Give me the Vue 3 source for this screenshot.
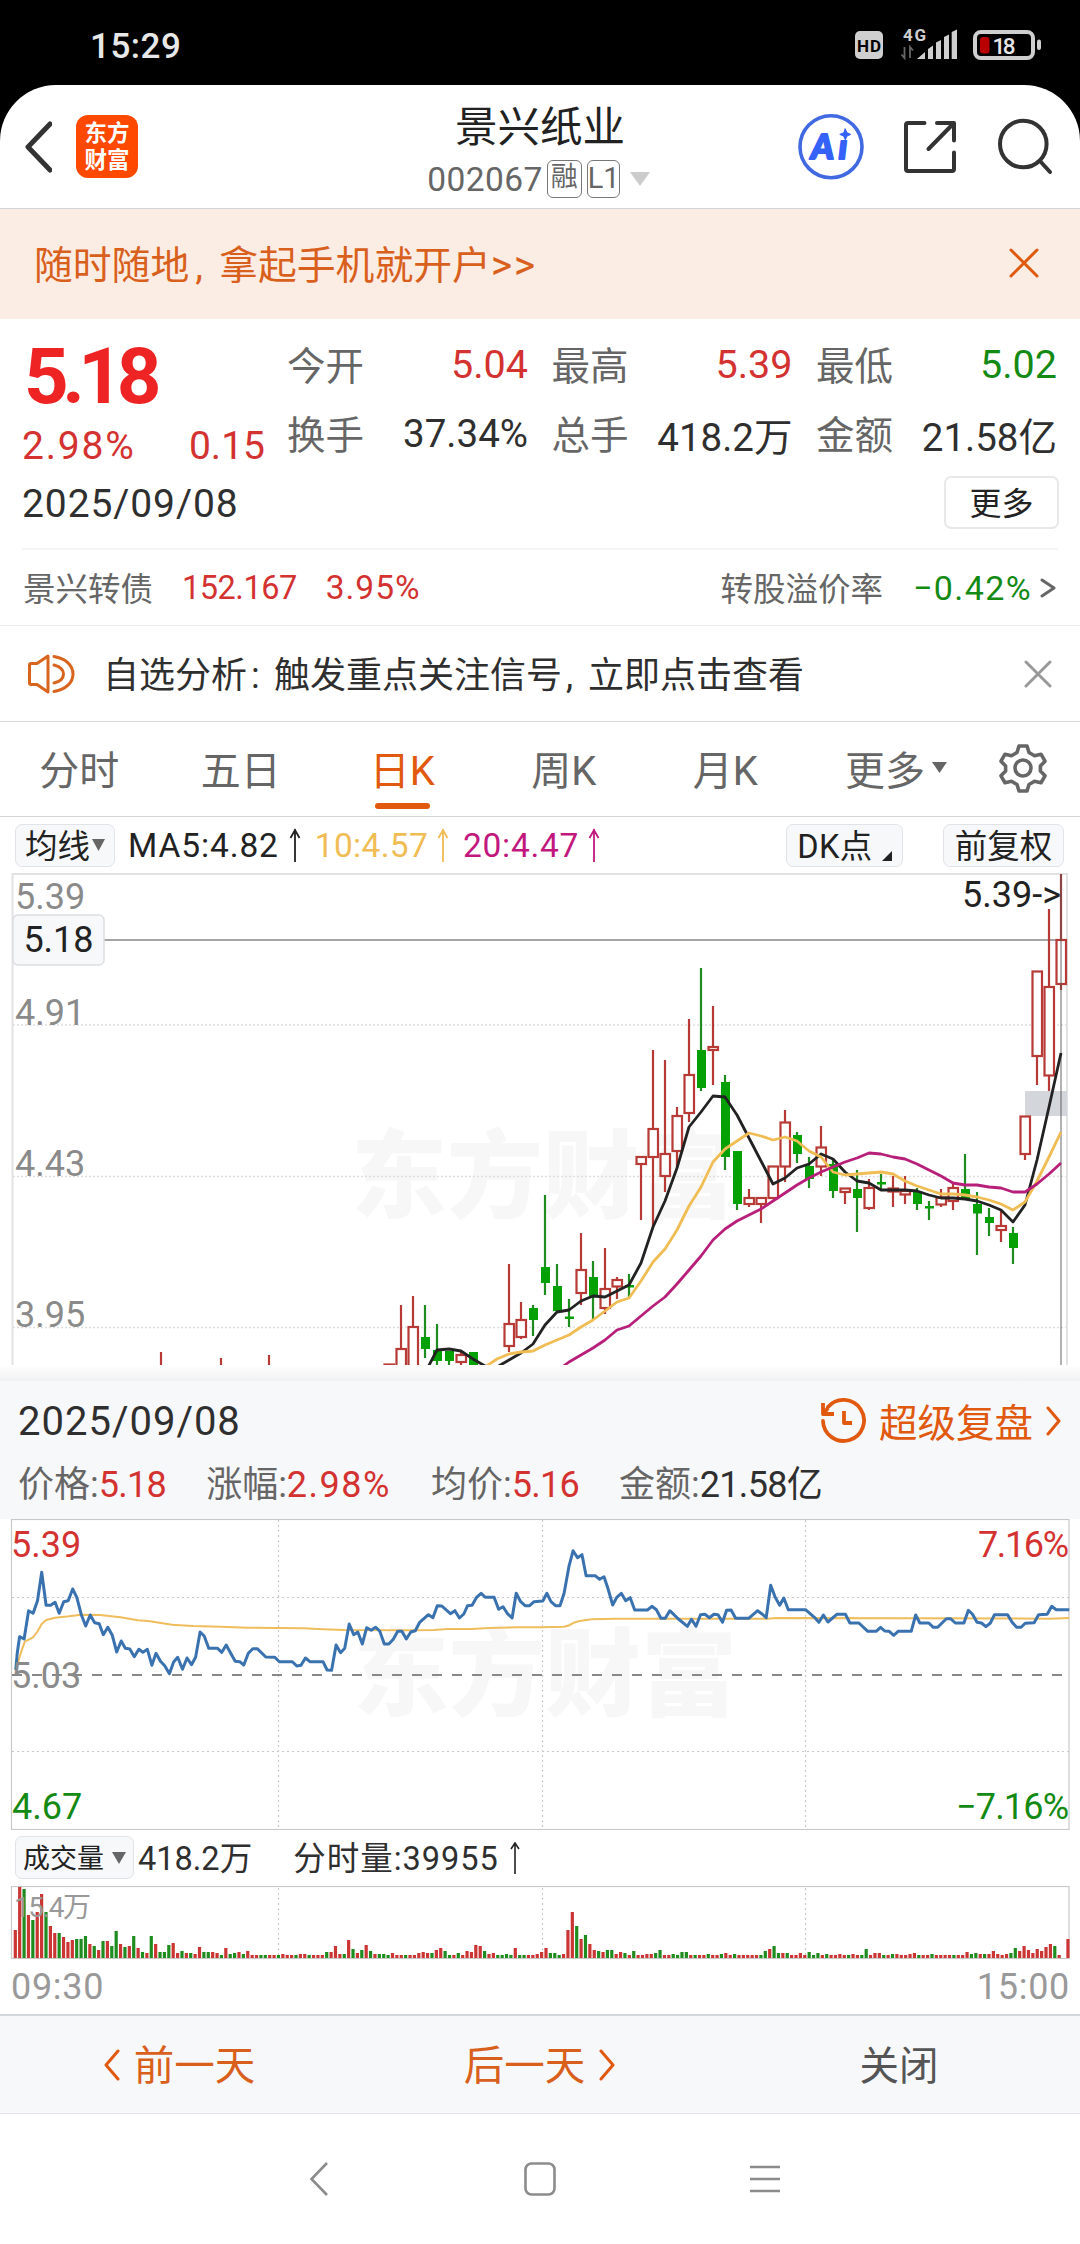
<template>
  <div class="phone">
    <div class="status-bar">
      <span class="clock">15:29</span>
      <svg class="status-icons" width="190" height="42" viewBox="852 21 190 42">
        <rect x="855" y="31" width="28" height="28" rx="5" fill="#cfcfcf" />
        <text x="857" y="51.5" font-size="17" font-weight="700" textLength="24" fill="#000">HD</text>
        <text x="903" y="40.5" font-size="17" font-weight="700" textLength="23" fill="#cfcfcf">4G</text>
        <path d="M904.5 47v11l-3-3.500M910 58v-11l3 3.500" fill="none" stroke="#666" stroke-width="1.800" />
        <path d="M917 59l8-7v7zM928 59V49l5-3.500V59zM936 59V42.500l5-2.500v19zM944 59V37l5-2.500V59zM951.700 59V32l5.300-2.500V59z" fill="#cfcfcf" />
        <rect x="975" y="32" width="58" height="26" rx="6" fill="none" stroke="#cfcfcf" stroke-width="4" />
        <rect x="980" y="37" width="9.500" height="16.500" rx="3" fill="#b80000" />
        <rect x="1037" y="39.500" width="4" height="10.500" rx="2" fill="#cfcfcf" />
        <text x="992.500" y="53.500" font-size="22.500" font-weight="500" textLength="23" fill="#e6e6e6">18</text>
      </svg>
    </div>

    <header class="header">
      <div class="header-left">
        <svg width="28" height="52" viewBox="0 0 28 52" class="line-icon">
          <path d="M26 3L4 26l22 23" stroke-width="5" />
        </svg>
        <div class="app-logo"><span>东方</span><span>财富</span></div>
      </div>
      <div class="header-title">
        <h1>景兴纸业</h1>
        <div class="stock-code">
          <span>002067</span><i class="tag">融</i><i class="tag tag-l1">L1</i>
          <svg width="20" height="14" viewBox="0 0 20 14"><path d="M0 0h20L10 14z" fill="#ccc" /></svg>
        </div>
      </div>
      <svg class="header-actions line-icon" width="260" height="70" viewBox="796 112 260 70">
        <circle cx="831" cy="146.700" r="31" stroke="#4169e1" stroke-width="3.600" />
        <text y="158.500" class="ai-text"><tspan x="811">A</tspan><tspan x="838.500">ı</tspan></text>
        <path d="M845.300 129l1.700 3.800 3.800 1.600-3.800 1.600-1.700 3.800-1.700-3.800-3.800-1.600 3.800-1.600z" fill="#3563fa" stroke="#3563fa" stroke-width="1" />
        <path d="M924.500 123H908q-2 0-2 2v44q0 2 2 2h44q2 0 2-2v-16.500M937 123h17v17.500M953 124l-24.500 25" />
        <circle cx="1023.300" cy="144" r="23.300" />
        <path d="M1040 161l10 11" />
      </svg>
    </header>

    <div class="banner">
      <p>随时随地<em>,</em>拿起手机就开户<b>&gt;&gt;</b></p>
      <svg width="30" height="30" viewBox="0 0 30 30" class="line-icon">
        <path d="M2 2l26 26M28 2L2 28" stroke="#e0590f" stroke-width="3" />
      </svg>
    </div>

    <section class="quote">
      <div class="quote-main">
        <div class="price">5.18</div>
        <div class="change"><span class="change-rate">2.98%</span><span>0.15</span></div>
      </div>
      <div class="quote-grid">
        <div v-for="item in quotes" :key="item.label" class="quote-cell">
          <label>{{ item.label }}</label>
          <span :class="item.tone">{{ item.value }}</span>
        </div>
      </div>
      <div class="quote-date">
        <span>2025/09/08</span>
        <button>更多</button>
      </div>
    </section>

    <section class="bond">
      <span class="bond-name">景兴转债</span>
      <span class="bond-price">152.167</span>
      <span class="bond-rate">3.95%</span>
      <span class="premium">转股溢价率</span>
      <span class="premium-rate">−0.42%</span>
      <svg width="17" height="22" viewBox="0 0 17 22" class="line-icon"><path d="M2 3l12 8-12 8" stroke="#666" stroke-width="3" /></svg>
    </section>

    <section class="alert">
      <svg width="48" height="42" viewBox="0 0 48 42" class="line-icon" >
        <g stroke="#d9641e" stroke-width="3">
          <path d="M2.500 12q0-1.500 1.500-1.500h6L21 3v36L10 31.500H4q-1.500 0-1.500-1.500z" />
          <path d="M27 3.500c12 2 19 9 19 17.500s-7 15.500-19 17.500" />
          <path d="M27 12c6 1.500 9.500 5 9.500 9s-3.500 7.500-9.500 9" />
        </g>
      </svg>
      <p>自选分析<em>:</em>触发重点关注信号<em>,</em>立即点击查看</p>
      <svg width="28" height="28" viewBox="0 0 28 28" class="line-icon">
        <path d="M2 2l24 24M26 2L2 26" stroke="#999" stroke-width="3" />
      </svg>
    </section>

    <nav class="tabs">
      <div v-for="tab in tabs" :key="tab" class="tab" :class="{ active: tab === activeTab }" @click="activeTab = tab">
        {{ tab }}
        <svg v-if="tab === '更多'" width="15" height="11" viewBox="0 0 15 11"><path d="M0 0h15L7.500 11z" fill="#666" /></svg>
      </div>
      <div class="tab-setting">
        <svg width="50" height="50" viewBox="0 0 50 50" class="line-icon">
          <g stroke="#666" stroke-width="3.600">
            <path d="M21 3h8l2 6.500 5.500 3.200 6.500-1.500 4 7-4.600 4.800v5l4.600 4.800-4 7-6.500-1.500-5.500 3.200-2 6.500h-8l-2-6.500-5.500-3.200L7 39.800l-4-7L7.600 28v-5L3 18.200l4-7 6.500 1.500L19 9.500z" />
            <circle cx="25" cy="25" r="8" />
          </g>
        </svg>
      </div>
    </nav>

    <div class="indicator">
      <button class="chip chip-ma"><span>均线</span><svg width="13" height="12" viewBox="0 0 13 12"><path d="M0 0h13L6.500 12z" fill="#666" /></svg></button>
      <span v-for="ma in averages" :key="ma.text" class="ma" :class="ma.name">
        {{ ma.text }}
        <svg width="12" height="34" viewBox="0 0 12 34" fill="none" stroke="currentColor" stroke-width="1.800"><path d="M6 34V1M1.500 10L6 2l4.500 8" /></svg>
      </span>
      <button class="chip chip-dk"><span>DK点</span><svg width="10" height="10" viewBox="0 0 10 10"><path d="M10 0v10H0z" fill="#222" /></svg></button>
      <button class="chip"><span>前复权</span></button>
    </div>

    <!-- 日K -->
    <svg class="chart" width="1080" height="492" viewBox="0 873 1080 492">
      <text x="351" y="1210" class="watermark">东方财富</text>
      <g stroke="#dedede" stroke-width="1.500" stroke-dasharray="2 2">
        <path d="M13 1025h1054M13 1176.500h1054M13 1327.500h1054" />
      </g>
      <path d="M12.500 1370V874H1067V1370" fill="none" stroke="#e2e2e2" stroke-width="2" />
      <path d="M104 940h963" stroke="#a5a5a5" stroke-width="1.800" />
      <rect x="1025" y="1091" width="42" height="25" fill="#d3d6db" />
      <g v-for="c in candles" :key="c.x" :class="c.up ? 'rise' : 'fall'">
        <template v-if="c.up">
          <path :d="`M${c.x} ${c.high}V${c.top}M${c.x} ${c.bottom}V${c.low}`" />
          <rect :x="c.x - 4.5" :y="c.top" width="9.500" :height="c.bottom - c.top" />
        </template>
        <template v-else>
          <path :d="`M${c.x} ${c.high}V${c.low}`" />
          <rect :x="c.x - 4" :y="c.top" width="9" :height="c.bottom - c.top" />
        </template>
      </g>
      <path d="M1061 874V1365" stroke="#555" stroke-opacity="0.45" stroke-width="2" />
      <g fill="none" stroke-width="2.800" stroke-linejoin="round">
        <polyline :points="maLine(425, ma5)" stroke="#222" />
        <polyline :points="maLine(485, ma10)" stroke="#f0bd55" />
        <polyline :points="maLine(557, ma20)" stroke="#b81f7a" />
      </g>
      <g class="axis">
        <text x="15" y="909">5.39</text>
        <text x="15" y="1025">4.91</text>
        <text x="15" y="1176">4.43</text>
        <text x="15" y="1327">3.95</text>
        <text x="1061" y="907" text-anchor="end" class="axis-current">5.39-&gt;</text>
      </g>
      <rect x="13" y="915" width="91" height="50" rx="5" fill="#f7f8fa" stroke="#dcdfe3" stroke-width="1.500" />
      <text x="58.500" y="952" text-anchor="middle" class="axis-current">5.18</text>
    </svg>
    <div class="sheet-shadow"></div>

    <section class="replay">
      <div class="replay-head">
        <span class="replay-date">2025/09/08</span>
        <div class="replay-link">
          <svg width="46" height="46" viewBox="0 0 46 46" class="line-icon">
            <g stroke="#e0590f" stroke-width="3.800">
              <path d="M3 23a20.500 20.500 0 1 0 5-14" />
              <path d="M3 5v11h11M8 10l-4 5M24 13v12h8" stroke-linecap="butt" />
            </g>
          </svg>
          <span>超级复盘</span>
          <svg width="16" height="30" viewBox="0 0 16 30" class="line-icon"><path d="M2 2l11 13L2 28" stroke="#e0590f" stroke-width="3" /></svg>
        </div>
      </div>
      <div class="replay-stats">
        <span v-for="s in stats" :key="s.label">{{ s.label }}:<b :class="s.tone">{{ s.value }}</b></span>
      </div>
    </section>

    <!-- 分时 -->
    <svg class="chart" width="1080" height="311" viewBox="0 1519 1080 311">
      <text x="353" y="1708" class="watermark">东方财富</text>
      <g fill="none" stroke="#c9c9c9" stroke-width="1.200" stroke-dasharray="2 3">
        <path d="M12 1597.500h1057M12 1751.500h1057M278.500 1520v309M542.500 1520v309M805.500 1520v309" />
      </g>
      <rect x="11.500" y="1519.500" width="1057.500" height="310" fill="none" stroke="#c8c8c8" stroke-width="1.200" />
      <path d="M12 1675h1052" stroke="#888" stroke-width="2" stroke-dasharray="10 10" />
      <g fill="none" stroke-linejoin="round">
        <polyline :points="avgLine" stroke="#efbd5c" stroke-width="2" />
        <polyline :points="priceLine" stroke="#3a72b0" stroke-width="3" />
      </g>
      <g class="axis">
        <text x="11" y="1557" class="axis-up">5.39</text>
        <text x="11" y="1688">5.03</text>
        <text x="12" y="1819" class="axis-down">4.67</text>
        <text x="978" y="1557" textLength="91" class="axis-up">7.16%</text>
        <text x="956" y="1819" textLength="113" class="axis-down">−7.16%</text>
      </g>
    </svg>

    <div class="volume-head">
      <button class="chip chip-vol"><span>成交量</span><svg width="14" height="12" viewBox="0 0 14 12"><path d="M0 0h14L7 12z" fill="#666" /></svg></button>
      <span class="vol-total">418.2万</span>
      <span class="vol-minute">分时量:39955</span>
      <svg width="12" height="32" viewBox="0 0 12 32" fill="none" stroke="#222" stroke-width="1.600"><path d="M6 32V1M2 7l4-6 4 6" /></svg>
    </div>
    <svg class="chart" width="1080" height="73" viewBox="0 1886 1080 73">
      <path d="M278.500 1888v70M542.500 1888v70M805.500 1888v70" stroke="#c9c9c9" stroke-width="1.200" stroke-dasharray="2 3" />
      <rect x="11.500" y="1886.500" width="1057.500" height="72" fill="none" stroke="#c8c8c8" stroke-width="1.200" />
      <rect
        v-for="(v, i) in volumes"
        :key="i"
        :x="13.7 + i * 4.386"
        :y="1958 - Math.abs(v)"
        width="3.200"
        :height="Math.abs(v)"
        :fill="v > 0 ? '#cb3533' : '#1f8c1f'"
      />
      <text x="14" y="1916.500" textLength="77" class="vol-max">15.4万</text>
    </svg>
    <div class="time-axis"><span>09:30</span><span>15:00</span></div>

    <div class="pager">
      <div class="pager-item">
        <svg width="18" height="32" viewBox="0 0 18 32" class="line-icon"><path d="M15 2L3 16l12 14" stroke="#e0590f" stroke-width="3" /></svg>
        <span>前一天</span>
      </div>
      <div class="pager-item next">
        <span>后一天</span>
        <svg width="18" height="32" viewBox="0 0 18 32" class="line-icon"><path d="M3 2l12 14L3 30" stroke="#e0590f" stroke-width="3" /></svg>
      </div>
      <div class="pager-item close"><span>关闭</span></div>
    </div>

    <div class="system-nav">
      <svg width="480" height="36" viewBox="305 2161 480 36" fill="none" stroke="#8c8c8c" stroke-width="2.600">
        <path d="M327 2163l-15.500 16 15.500 16" />
        <rect x="525.500" y="2163.500" width="29" height="31" rx="6" />
        <path d="M750 2167h30M750 2179h30M750 2191h30" />
      </svg>
    </div>
  </div>
</template>

<script setup>
import { ref, computed } from 'vue'

const quotes = [
  { label: '今开', value: '5.04', tone: 'up' },
  { label: '最高', value: '5.39', tone: 'up' },
  { label: '最低', value: '5.02', tone: 'down' },
  { label: '换手', value: '37.34%' },
  { label: '总手', value: '418.2万' },
  { label: '金额', value: '21.58亿' }
]

const tabs = ['分时', '五日', '日K', '周K', '月K', '更多']
const activeTab = ref('日K')

const averages = [
  { name: 'ma5', text: 'MA5:4.82' },
  { name: 'ma10', text: '10:4.57' },
  { name: 'ma20', text: '20:4.47' }
]

const stats = [
  { label: '价格', value: '5.18', tone: 'up' },
  { label: '涨幅', value: '2.98%', tone: 'up' },
  { label: '均价', value: '5.16', tone: 'up' },
  { label: '金额', value: '21.58亿', tone: '' }
]

// [x, 最高, 最低, 实体上沿, 实体下沿, 是否阳线]
const candles = [
  [161, 1352, 1380, 1370, 1380, 1],
  [221, 1358, 1380, 1370, 1380, 1],
  [269, 1355, 1380, 1370, 1380, 1],
  [389, 1364.5, 1400, 1364.5, 1400, 1],
  [401, 1305, 1400, 1349, 1400, 1],
  [413, 1296, 1400, 1327, 1400, 1],
  [425, 1305, 1358, 1337, 1349, 0],
  [437, 1324, 1366, 1350, 1361, 0],
  [449, 1351, 1366, 1351, 1361, 0],
  [461, 1352, 1366, 1355, 1362, 1],
  [473, 1352, 1370, 1352, 1370, 0],
  [509, 1264, 1352, 1324, 1346, 1],
  [521, 1302, 1339, 1320, 1337, 1],
  [533, 1305, 1336, 1308, 1320, 0],
  [545, 1195, 1295, 1267, 1283, 0],
  [557, 1264, 1311, 1286, 1311, 0],
  [569, 1299, 1327, 1316.5, 1319, 0],
  [581, 1233, 1305, 1270, 1293, 1],
  [593, 1261, 1320, 1277, 1296, 0],
  [605, 1248, 1314, 1289, 1308, 1],
  [617, 1277, 1299, 1280, 1286.5, 1],
  [629, 1274, 1299, 1285, 1287.5, 0],
  [641, 1157, 1220, 1157, 1164, 1],
  [653, 1050, 1227, 1129, 1157, 1],
  [665, 1060, 1192, 1154, 1176, 1],
  [677, 1107, 1168, 1116, 1151, 1],
  [689, 1019, 1122, 1075, 1113, 1],
  [701, 968, 1091, 1050, 1088, 0],
  [713, 1006, 1085, 1047, 1050, 1],
  [725, 1075, 1170, 1082, 1157, 0],
  [737, 1151, 1210, 1151, 1204, 0],
  [749, 1189, 1207, 1198, 1204, 1],
  [761, 1198, 1223, 1198, 1204, 1],
  [773, 1166, 1198, 1166.5, 1198, 1],
  [785, 1110, 1182, 1122.5, 1166.5, 1],
  [797, 1132, 1163, 1135, 1154, 0],
  [809, 1157, 1188, 1166, 1179, 0],
  [821, 1126, 1176, 1147.5, 1166.5, 1],
  [833, 1158, 1198, 1164, 1191, 0],
  [845, 1188, 1204, 1188.5, 1192, 1],
  [857, 1170, 1232, 1189, 1198, 0],
  [869, 1179, 1210, 1188, 1208, 1],
  [881, 1174, 1189, 1182, 1184.5, 0],
  [893, 1176, 1207, 1188.5, 1191.5, 1],
  [905, 1176, 1204, 1191, 1194.5, 1],
  [917, 1188, 1210, 1192, 1204, 0],
  [929, 1201, 1220, 1206, 1208.5, 0],
  [941, 1189, 1207, 1197.5, 1204.5, 1],
  [953, 1183, 1210, 1188, 1201, 1],
  [965, 1154, 1200, 1189, 1200, 0],
  [977, 1192, 1255, 1204, 1213.5, 0],
  [989, 1208, 1236, 1217, 1223, 0],
  [1001, 1210, 1242, 1226, 1230, 1],
  [1013, 1227, 1264, 1233, 1248, 0],
  [1025, 1116, 1160, 1116.5, 1154, 1],
  [1037, 971, 1085, 971.5, 1056, 1],
  [1049, 909, 1091, 987, 1075.5, 1],
  [1061, 874, 990, 940, 984, 1]
].map(([x, high, low, top, bottom, up]) => ({ x, high, low, top, bottom, up }))

const ma5 = [
  1373, 1350, 1349, 1351, 1359, 1366, 1367, 1360, 1353, 1344, 1325, 1312, 1310, 1301, 1296, 1297, 1291,
  1285, 1263, 1227, 1201, 1168, 1127, 1112, 1096, 1097, 1115, 1138, 1161, 1184, 1178, 1168, 1164, 1154,
  1159, 1172, 1181, 1183, 1190, 1190, 1190, 1191, 1195, 1198, 1198, 1199, 1201, 1205, 1210, 1222, 1205,
  1160, 1107, 1053
]
const ma10 = [
  1367, 1359, 1354, 1352, 1351, 1345, 1340, 1335, 1327, 1320, 1311, 1302, 1298, 1281, 1262, 1249, 1230,
  1206, 1187, 1162, 1149, 1141, 1133, 1136, 1140, 1137, 1141, 1151, 1157, 1172, 1175, 1174, 1173, 1172,
  1174, 1181, 1186, 1190, 1194, 1194, 1195, 1197, 1200, 1204, 1210, 1202, 1181, 1157, 1132
]
const ma20 = [
  1371, 1362, 1355, 1348, 1340, 1330, 1326, 1316, 1306, 1297, 1284, 1270, 1256, 1240, 1229, 1221, 1215,
  1209, 1201, 1193, 1185, 1178, 1172, 1167, 1162, 1158, 1153, 1154, 1157, 1159, 1164, 1170, 1176, 1183,
  1185, 1185, 1187, 1188, 1192, 1192, 1184, 1174, 1163
]
const maLine = (start, values) => values.map((y, i) => `${start + i * 12},${y}`).join(' ')

// 上午、下午两段
const priceAm = '46,480 50,430 57,380 70,387 83,302 96,310 109,272 121,187 134,286 147,286 160,277 172,310 185,275 198,272 211,237 223,262 236,314 249,348 262,315 275,338 288,341 300,374 313,352 326,376 339,426 352,393 364,415 377,417 390,440 403,418 415,427 428,418 441,466 453,430 466,454 479,468 492,491 504,456 516,442 530,478 543,444 556,464 568,442 581,366 593,378 606,415 632,415 644,427 657,405 670,430 683,454 696,455 708,465 721,430 734,416 747,416 772,441 798,442 811,455 849,455 862,468 874,466 887,444 900,455 938,455 950,480 963,481 976,405 989,428 1001,415 1014,342 1027,374 1039,366 1052,402 1065,353 1078,361 1091,352 1103,364 1116,402 1129,402 1142,388 1155,364 1167,364 1180,387 1193,366 1206,362 1218,338 1244,314 1257,323 1270,287 1283,288 1308,311 1321,302 1334,324 1347,312 1358,287 1371,286 1384,262 1397,250 1409,262 1435,262 1448,298 1461,290 1473,310 1487,324 1499,250 1512,275 1525,287 1538,287 1551,275 1567,274'
const pricePm = '8,273 20,250 32,275 45,287 58,287 70,250 84,170 96,122 109,143 122,134 134,197 160,197 173,208 186,200 198,238 211,285 223,262 236,250 249,272 262,263 275,300 312,300 325,289 338,299 351,325 364,325 377,302 402,327 428,349 440,328 453,349 466,314 479,313 492,323 505,313 517,314 530,337 542,301 555,300 568,325 606,325 632,302 645,312 657,323 670,226 683,262 696,286 708,264 721,299 771,299 797,322 810,337 823,315 836,336 862,313 887,313 900,339 926,339 952,364 976,364 989,352 1001,363 1014,364 1027,376 1040,364 1078,364 1091,315 1103,339 1129,339 1142,352 1155,352 1180,326 1192,326 1206,339 1231,339 1244,301 1256,313 1269,337 1282,339 1295,350 1308,339 1320,314 1358,314 1371,337 1384,352 1397,352 1409,340 1435,338 1448,314 1473,313 1486,289 1499,299 1537,299'
const avgAm = '46,480 60,430 72,395 95,383 108,366 121,342 134,330 160,323 200,319 236,314 290,315 350,322 400,331 430,333 500,344 560,348 640,350 720,353 880,355 940,358 1000,360 1200,361 1260,360 1300,357 1370,357 1420,354 1500,352 1567,352'
const avgPm = '8,352 70,350 85,346 98,338 115,333 150,328 220,326 660,326 685,324 1070,325 1480,326 1537,324'

const place = (points, left) => points.split(' ').map(p => {
  const [x, y] = p.split(',').map(Number)
  return `${(left + x / 2.904).toFixed(1)},${(1510 + y / 3).toFixed(1)}`
}).join(' ')

const priceLine = computed(() => `${place(priceAm, 0)} ${place(pricePm, 540)}`)
const avgLine = computed(() => `${place(avgAm, 0)} ${place(avgPm, 540)}`)

// 正数为红柱，负数为绿柱
const volumes = [
  28, 71, -69, 43, -38, 46, 64, -46, 32, 25, -25, 21, 16, 18, -19, -19, -22, 14, -12, 8,
  -17, 17, -12, -27, 14, -11, 12, -22, 10, -6, 5, -22, 14, -6, -6, -13, 15, 5, -7, 5,
  -5, 4, 11, -6, -6, 6, 5, -3, 10, -4, -5, 6, -4, 7, 3, 3, -3, -3, 3, 3,
  -3, 4, 3, 3, -3, 4, 4, -3, 3, 3, 3, -6, 6, 12, 4, -4, 18, -9, 5, -8,
  13, -7, 4, -4, -4, -3, 5, 3, 3, -3, 3, 3, 5, 6, 5, -5, 8, 10, -7, -3,
  3, -5, 3, 7, 6, 13, 12, -7, 4, 5, -3, -3, -4, -3, 10, -3, -3, 3, 3, 4,
  6, 10, -5, -5, -3, 4, 28, 46, -32, 19, -23, 14, 8, -7, 6, -8, -8, 4, 6, -5,
  3, -7, 3, 3, 4, 4, -5, -8, 3, 3, -4, -3, -6, -6, 3, -3, 3, 3, -4, 3,
  3, -4, 5, 3, -4, 3, 3, 3, 3, 3, -3, -7, 9, -12, -5, 5, -5, 3, 3, 5,
  3, -6, -3, -5, 3, -4, 3, 3, 4, 3, -3, 4, 3, -3, -9, 3, 5, 5, -3, 3,
  -4, 4, 3, 3, 4, 5, -3, 3, 3, -4, 3, 3, 3, 3, -3, 3, 3, 6, -4, -5,
  4, -4, 4, 7, 4, 3, 4, -5, -10, 7, 12, 8, 5, 9, 7, 11, 14, -12, 3, 0,
  19
]
</script>

<style>
body {
  margin: 0;
  background: #fff;
}
</style>

<style scoped>
.phone {
  width: 1080px;
  height: 2244px;
  overflow: hidden;
  background: #fff;
  color: #2f2f2f;
  font-family: Roboto, "Noto Sans CJK SC", sans-serif;
  display: flex;
  flex-direction: column;
}

.phone > * {
  box-sizing: border-box;
  flex: none;
}

svg {
  display: block;
  flex: none;
}

button {
  font-family: inherit;
  margin: 0;
  padding: 0;
}

.line-icon {
  fill: none;
  stroke: #333;
  stroke-width: 4;
  stroke-linecap: round;
  stroke-linejoin: round;
}

.up {
  color: #d33230;
}

.down {
  color: #148a14;
}

/* 状态栏 */
.status-bar {
  height: 85px;
  background: #000;
  display: flex;
  justify-content: space-between;
  align-items: flex-start;
  padding: 21px 38px 0 90px;
  box-shadow: 0 60px 0 #000;
}

.clock {
  margin-top: 7px;
  color: #e8e8e8;
  font-size: 35px;
  line-height: 38px;
  font-weight: 500;
  letter-spacing: 0.5px;
}

/* 顶部 */
.header {
  position: relative;
  height: 124px;
  background: #fff;
  border-radius: 56px 56px 0 0;
  border-bottom: 1.5px solid #d4d4d6;
  display: grid;
  grid-template-columns: 1fr auto 1fr;
  padding: 0 24px;
}

.header-left {
  display: flex;
  align-items: center;
  gap: 24px;
}

.app-logo {
  width: 62px;
  height: 63px;
  border-radius: 12px;
  background: #ff4800;
  color: #fff;
  font-size: 22.5px;
  font-weight: 700;
  line-height: 27px;
  display: flex;
  flex-direction: column;
  align-items: center;
  justify-content: center;
}

.header-title {
  text-align: center;
}

.header-title h1 {
  margin: 18px 0 0;
  font-size: 42.5px;
  line-height: 50px;
  font-weight: 400;
  color: #222;
}

.stock-code {
  display: flex;
  align-items: center;
  height: 38px;
  margin: 7px 3px 0 0;
  color: #666;
  font-size: 33.5px;
}

.stock-code > span {
  letter-spacing: 0.4px;
}

.tag {
  box-sizing: border-box;
  width: 35px;
  height: 38px;
  margin-left: 4px;
  border: 1.5px solid #777;
  border-radius: 6px;
  font-style: normal;
  font-size: 27px;
  line-height: 33px;
  text-align: center;
}

.tag-l1 {
  width: 33px;
  margin-left: 5px;
  font-size: 29px;
  line-height: 35px;
}

.stock-code svg {
  margin-left: 10px;
}

.header-actions {
  justify-self: end;
  margin-top: 27px;
}

.ai-text {
  font-family: Lato, sans-serif;
  font-size: 35px;
  font-weight: 900;
  font-style: italic;
  fill: #3563fa;
  stroke: #3563fa;
  stroke-width: 2;
}

/* 开户横幅 */
.banner {
  height: 110px;
  background: #fcede4;
  color: #d9601c;
  display: flex;
  align-items: center;
  justify-content: space-between;
  padding: 0 41px 3px 34px;
  font-size: 38.8px;
}

.banner p {
  margin: 0 0 2px;
}

.banner em {
  display: inline-block;
  width: 24px;
  padding-left: 6px;
  font-style: normal;
}

.banner b {
  font-weight: 400;
  font-size: 41px;
  letter-spacing: 1.500px;
}

/* 行情 */
.quote {
  height: 231px;
  margin: 0 22px;
  border-bottom: 2px solid #f4f4f5;
  display: grid;
  grid-template-columns: 266px 1fr;
  grid-template-rows: 157px 1fr;
}

.price {
  margin: 16px 0 0 2px;
  font-size: 78px;
  line-height: 84px;
  font-weight: 700;
  color: #ee2424;
  letter-spacing: -6.5px;
}

.change {
  display: flex;
  justify-content: space-between;
  width: 243px;
  font-size: 39px;
  line-height: 54px;
  color: #d33230;
}

.change-rate {
  letter-spacing: 1.8px;
}

.quote-grid {
  display: grid;
  grid-template-columns: repeat(3, 240px);
  grid-auto-rows: 69px;
  column-gap: 24.500px;
  padding-top: 12px;
}

.quote-cell {
  display: flex;
  justify-content: space-between;
  align-items: center;
  margin-left: -1px;
  font-size: 38.500px;
}

.quote-cell label {
  padding-bottom: 5px;
  color: #666;
}

.quote-cell span {
  padding-bottom: 2px;
}

.quote-cell .up,
.quote-cell .down {
  font-size: 39.500px;
}

.quote-date {
  grid-column: 1 / 3;
  display: flex;
  justify-content: space-between;
  align-items: flex-start;
  margin-right: -1px;
  font-size: 39px;
  line-height: 56px;
  letter-spacing: 0.900px;
}

.quote-date button {
  width: 115px;
  height: 53px;
  border: 2px solid #e8e8e8;
  border-radius: 7px;
  background: #fff;
  color: #222;
  font-size: 32px;
  padding-bottom: 3px;
}

/* 转债 */
.bond {
  height: 76px;
  display: flex;
  align-items: center;
  padding: 0 23px;
  border-bottom: 1.500px solid #ececee;
  font-size: 32.500px;
  color: #666;
}

.bond-name,
.premium {
  padding-bottom: 2px;
}

.bond-price,
.bond-rate {
  margin-left: 29px;
  color: #d33230;
  letter-spacing: -0.500px;
}

.bond-rate {
  font-size: 33.500px;
  letter-spacing: 1px;
}

.premium {
  margin-left: auto;
}

.premium-rate {
  margin: 0 8px 0 30px;
  color: #148a14;
  font-size: 34px;
  letter-spacing: 1.400px;
}

/* 提示 */
.alert {
  height: 96px;
  display: flex;
  align-items: center;
  padding: 0 28px 0 27px;
  border-bottom: 1.500px solid #dadada;
}

.alert p {
  flex: 1;
  margin: 0 0 3px 28px;
  font-size: 36px;
}

.alert em {
  display: inline-block;
  width: 26px;
  padding-left: 4px;
  box-sizing: border-box;
  font-style: normal;
}

.alert em:first-of-type {
  width: 27px;
}

/* 周期 */
.tabs {
  height: 95px;
  display: flex;
  border-bottom: 1.500px solid #d4d4d6;
  font-size: 40px;
  color: #666;
}

.tab {
  position: relative;
  box-sizing: border-box;
  width: 161.500px;
  padding: 0 3px 3px 0;
  display: flex;
  align-items: center;
  justify-content: center;
  gap: 7px;
}

.tab:nth-child(6) {
  width: 180px;
}

.tab.active {
  color: #e0590f;
}

.tab.active::after {
  content: '';
  position: absolute;
  bottom: 7px;
  width: 55px;
  height: 6px;
  border-radius: 3px;
  background: #e0590f;
}

.tab-setting {
  flex: 1;
  display: flex;
  align-items: center;
  justify-content: center;
  padding: 0 22px 2px 0;
}

/* 指标栏 */
.indicator {
  height: 56px;
  display: flex;
  align-items: center;
  padding: 0 16px 0 15px;
}

.chip {
  box-sizing: border-box;
  height: 43px;
  width: 121px;
  border: 1.500px solid #e0e3e7;
  border-radius: 7px;
  background: #f7f8fa;
  color: #222;
  font-size: 32.500px;
  display: flex;
  align-items: center;
  justify-content: center;
  gap: 2px;
}

.chip span {
  padding-bottom: 3px;
}

.chip-ma {
  width: 100px;
  margin-right: 13px;
}

.chip-dk {
  width: 117px;
  margin: 0 40px 0 auto;
  gap: 9px;
}

.chip-dk span {
  letter-spacing: 0.500px;
}

.chip-dk svg {
  align-self: flex-end;
  margin-bottom: 5px;
}

.chip-vol {
  width: 119px;
  font-size: 27px;
  gap: 8px;
}

.ma {
  display: flex;
  align-items: center;
  gap: 9px;
  margin-right: 14px;
  font-size: 33.500px;
  letter-spacing: 0.300px;
}

.ma5 {
  color: #222;
  gap: 10px;
  letter-spacing: 0.900px;
}

.ma10 {
  color: #f0bd55;
}

.ma20 {
  color: #c2187e;
  letter-spacing: 0.700px;
}

/* 图表 */
.watermark {
  font-size: 96px;
  font-weight: 900;
  fill: #f7f7f7;
}

.axis,
.axis-current {
  font-size: 36px;
  fill: #8a8a8a;
}

.axis-current {
  fill: #222;
}

.axis-up {
  fill: #d33230;
}

.axis-down {
  fill: #148a14;
}

.rise path {
  stroke: #b83a36;
  stroke-width: 2.200;
}

.rise rect {
  fill: #fff;
  stroke: #b83a36;
  stroke-width: 2.200;
}

.fall path {
  stroke: #1f8c1f;
  stroke-width: 2.200;
}

.fall rect {
  fill: #04a004;
}

.vol-max {
  font-size: 28px;
  fill: #999;
}

.sheet-shadow {
  height: 16px;
  background: linear-gradient(#fff, #f1f1f1);
}

/* 复盘 */
.replay {
  height: 138px;
  background: #f7f8fa;
  padding: 10px 18px 0;
}

.replay-head,
.replay-link {
  display: flex;
  align-items: center;
}

.replay-head {
  justify-content: space-between;
  height: 60px;
}

.replay-date {
  font-size: 40px;
  letter-spacing: 1px;
}

.replay-link {
  color: #e0590f;
  font-size: 38.500px;
}

.replay-link span {
  margin: 0 13px 0 13px;
  padding-bottom: 3px;
}

.replay-stats {
  display: flex;
  gap: 40px;
  margin-top: 6px;
  font-size: 36px;
  line-height: 56px;
  color: #666;
}

.replay-stats b {
  font-weight: 400;
  letter-spacing: -0.700px;
}

.replay-stats span:nth-child(2) b {
  letter-spacing: 1.500px;
}

.replay-stats b:not(.up) {
  color: #2f2f2f;
}

/* 成交量 */
.volume-head {
  height: 56px;
  display: flex;
  align-items: center;
  padding: 0 0 1px 15px;
  font-size: 32.500px;
}

.vol-total {
  margin: 0 41px 0 4px;
  padding-bottom: 4px;
}

.vol-minute {
  margin-right: 10px;
  padding-bottom: 4px;
  letter-spacing: 1px;
}

.time-axis {
  height: 55px;
  display: flex;
  align-items: center;
  justify-content: space-between;
  padding: 0 10px 0 11px;
  color: #999;
  font-size: 36px;
  letter-spacing: 0.700px;
}

/* 翻页 */
.pager {
  height: 100px;
  background: #f7f8fa;
  border-top: 2px solid #d3d8de;
  border-bottom: 1.500px solid #e2e4e7;
  display: grid;
  grid-template-columns: repeat(3, 360px);
  font-size: 40.500px;
}

.pager-item {
  display: flex;
  align-items: center;
  justify-content: center;
  gap: 13px;
  padding-right: 2px;
  color: #d9601c;
}

.pager-item.next {
  padding: 0;
}

.pager-item span {
  padding-bottom: 4px;
}

.pager-item.close {
  color: #555;
  font-size: 39.500px;
}

.system-nav {
  flex: 1;
  display: flex;
  align-items: center;
  padding-left: 305px;
}
</style>
